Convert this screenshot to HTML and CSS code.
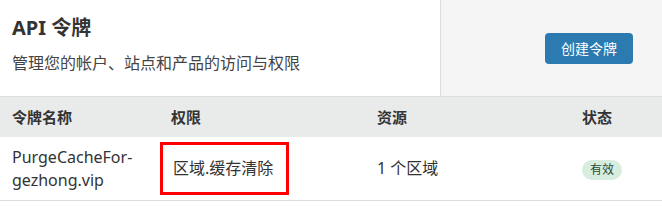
FILE: index.html
```html
<!DOCTYPE html>
<html lang="zh-CN">

<head>
    <meta charset="UTF-8">
    <title>API 令牌</title>
    <link rel="stylesheet" href="styles.css">
</head>

<body>
    <div class="top">
        <div class="intro">
            <h1>API 令牌</h1>
            <p>管理您的帐户、站点和产品的访问与权限</p>
        </div>
        <div class="actions">
            <div class="btn">创建令牌</div>
        </div>
    </div>

    <div class="table">
        <div class="row head">
            <div>令牌名称</div>
            <div>权限</div>
            <div>资源</div>
            <div>状态</div>
        </div>
        <div class="row">
            <div class="name">PurgeCacheFor-<br>gezhong.vip</div>
            <div><span class="mark">区域.缓存清除</span></div>
            <div>1 个区域</div>
            <div><span class="badge">有效</span></div>
        </div>
    </div>
</body>

</html>
```

FILE: styles.css
```css
* {
    box-sizing: border-box;
}

body {
    margin: 0;
    font-family: "Noto Sans", "Noto Sans CJK SC", sans-serif;
    color: #333;
    background-color: #fff;
}

.top {
    display: flex;
    height: 97px;
    border-bottom: 1px solid #ddd;
}

.intro {
    width: 441px;
    border-right: 1px solid #ddd;
    padding: 14px 12px 0;
}

h1 {
    margin: 0;
    font-size: 20px;
    line-height: 28px;
    font-weight: 700;
    color: #333;
}

.intro p {
    margin: 10px 0 0;
    font-size: 16px;
    line-height: 22px;
    color: #444;
}

.actions {
    flex: 1;
    background-color: #f5f5f5;
    display: flex;
    align-items: center;
    justify-content: flex-end;
    padding-right: 29px;
}

.btn {
    width: 88px;
    height: 31px;
    line-height: 31px;
    text-align: center;
    background-color: #2c7bb0;
    color: #fff;
    font-size: 14px;
    border-radius: 4px;
}

.row {
    display: grid;
    grid-template-columns: 159px 206px 205px 1fr;
    padding-left: 12px;
    align-items: center;
    font-size: 16px;
    line-height: 23px;
}

.row.head {
    height: 40px;
    background-color: #e9eaea;
    font-weight: 700;
    font-size: 15px;
}

.row:not(.head) {
    height: 64px;
    border-bottom: 1px solid #ddd;
}

.mark {
    display: inline-block;
    margin-left: -11px;
    padding: 12px 13px 12px 10px;
    border: 3px solid #f00;
}

.badge {
    display: inline-block;
    width: 40px;
    height: 20px;
    line-height: 20px;
    text-align: center;
    font-size: 12px;
    color: #2b4a36;
    background-color: #d6ede0;
    border-radius: 10px;
}
```
